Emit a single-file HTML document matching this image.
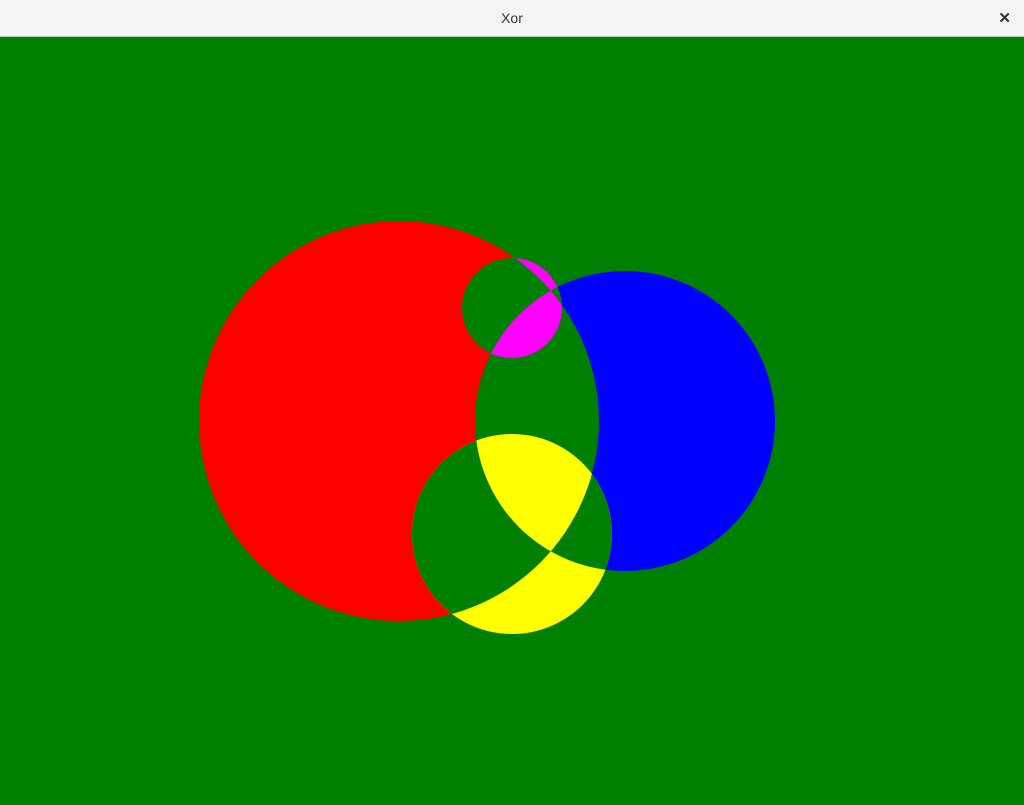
<!DOCTYPE html>
<html><head><meta charset="utf-8"><style>
html,body{margin:0;padding:0;width:1024px;height:805px;overflow:hidden;background:#008000;font-family:"Liberation Sans",sans-serif}
#bar{position:absolute;left:0;top:0;width:1024px;height:37px;background:#f4f4f4;border-bottom:1px solid #bdbdbd;box-sizing:border-box}
#t{position:absolute;left:0;width:1024px;top:10px;text-align:center;font-size:14px;color:#333}
#x{position:absolute;right:13px;top:9px;font-size:15px;color:#333;font-weight:bold}
svg{position:absolute;left:0;top:0}
</style></head><body>
<svg width="1024" height="805">
<defs>
<clipPath id="rc"><circle cx="399" cy="421" r="200"/></clipPath>
<clipPath id="xo"><path clip-rule="evenodd" d="M199,421a200,200 0 1,0 400,0a200,200 0 1,0 -400,0ZM475,421a150,150 0 1,0 300,0a150,150 0 1,0 -300,0Z"/></clipPath>
</defs>
<rect x="0" y="37" width="1024" height="768" fill="#008000"/>
<circle cx="399" cy="421" r="200" fill="#f00"/>
<circle cx="625" cy="421" r="150" fill="#00f"/>
<circle cx="625" cy="421" r="150" fill="#008000" clip-path="url(#rc)"/>
<circle cx="512" cy="308" r="50" fill="#f0f"/>
<circle cx="512" cy="534" r="100" fill="#ff0"/>
<g clip-path="url(#xo)" fill="#008000">
<circle cx="512" cy="308" r="50"/>
<circle cx="512" cy="534" r="100"/>
</g>
</svg>
<div id="bar"><div id="t">Xor</div><div id="x">✕</div></div>
</body></html>
